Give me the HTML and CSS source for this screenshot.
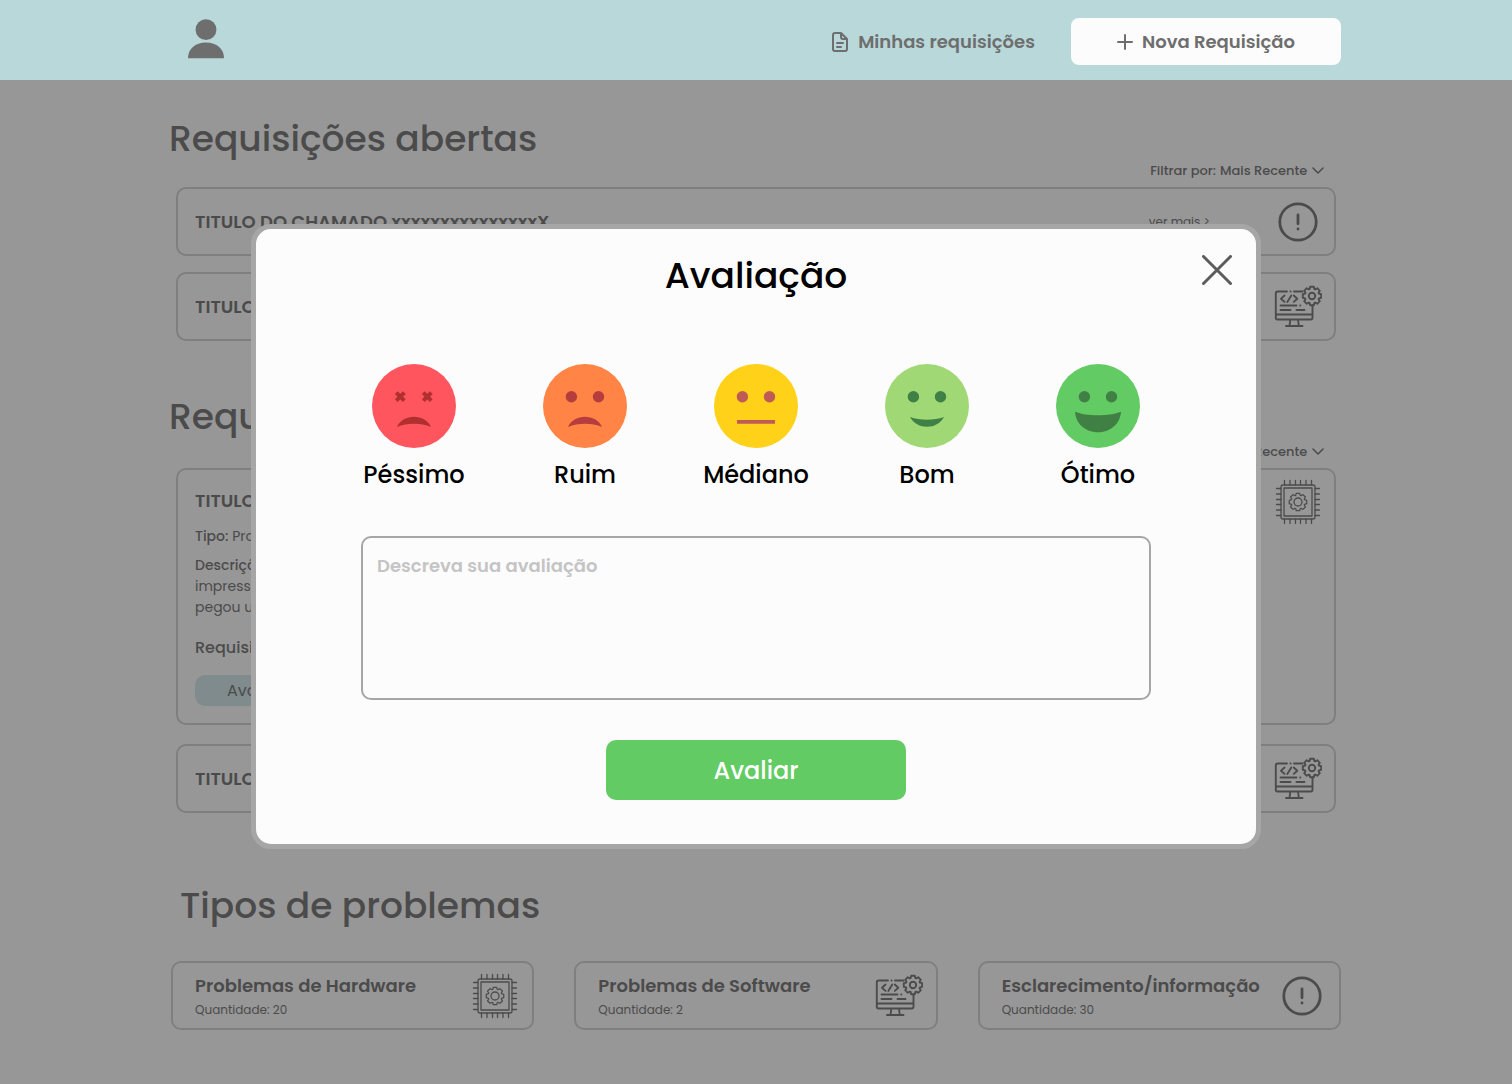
FILE: index.html
```html
<!DOCTYPE html>
<html lang="pt-BR">
<head>
<meta charset="utf-8">
<meta name="viewport" content="width=device-width, initial-scale=1">
<title>Requisições</title>
<link rel="stylesheet" href="styles.css">
</head>
<body>
<svg class="sprite" aria-hidden="true">
  <symbol id="gear" viewBox="-10 -10 20 20" overflow="visible">
    <path d="M6.9-2.4 9.2-1.8V1.8L6.9 2.4 6.6 3.2 7.8 5.2 5.2 7.8 3.2 6.6 2.4 6.9 1.8 9.2H-1.8L-2.4 6.9-3.2 6.6-5.2 7.8-7.8 5.2-6.6 3.2-6.9 2.4-9.2 1.8V-1.8L-6.9-2.4-6.6-3.2-7.8-5.2-5.2-7.8-3.2-6.6-2.4-6.9-1.8-9.2H1.8L2.4-6.9 3.2-6.6 5.2-7.8 7.8-5.2 6.6-3.2Z"/>
  </symbol>
  <symbol id="chip" viewBox="0 0 48 48">
    <rect x="7" y="7" width="34" height="34" rx="2"/>
    <rect x="10" y="10" width="28" height="28"/>
    <path d="M10.5 2.500v4.500M16 2.500v4.500M21.500 2.500v4.500M26.500 2.500v4.500M32 2.500v4.500M37.500 2.500v4.500M10.500 41v4.500M16 41v4.500M21.500 41v4.500M26.500 41v4.500M32 41v4.500M37.500 41v4.500M2.500 10.500H7M2.500 16H7M2.500 21.500H7M2.500 26.500H7M2.500 32H7M2.500 37.500H7M41 10.500h4.500M41 16h4.500M41 21.500h4.500M41 26.500h4.500M41 32h4.500M41 37.500h4.500"/>
    <use href="#gear" x="14.500" y="14.500" width="19" height="19"/>
    <circle cx="24" cy="24" r="4"/>
  </symbol>
  <symbol id="monitor" viewBox="0 0 48 48">
    <path d="M13 8.500H3.500Q1.800 8.500 1.800 10.200V34.800Q1.800 36.500 3.500 36.500H36.800Q38.500 36.500 38.500 34.800V22.500M20 8.500H28.500M16.400 8.500h.2M1.800 31.500H38.500M16.300 36.500 15.500 43M24 36.500 24.800 43M12 43H28.500M10.500 12.500 7 15.700 10.500 18.900M17.300 12.500 13.300 18.900M19.800 12.500 23.300 15.700 19.800 18.900M6.500 22.500H22.500M26.200 22.500h.2M6.500 27H16.500M22.500 27H30.500"/>
    <use href="#gear" x="28" y="3" width="20" height="20"/>
    <circle cx="38" cy="13" r="3.200"/>
  </symbol>
  <symbol id="alert" viewBox="0 0 48 48">
    <circle cx="24" cy="24" r="18.200"/>
    <path d="M24 17V25.800M24 30.800v.3"/>
  </symbol>
</svg>

<header class="topbar">
  <div class="topbar-inner">
    <a class="profile" href="#" aria-label="Perfil">
      <svg width="36" height="40" viewBox="0 0 36 40"><circle cx="18" cy="9.700" r="10.400"/><path d="M0 38.200C0 29 7 22.500 18 22.500S36 29 36 38.200Z"/></svg>
    </a>
    <nav class="topnav">
      <a class="nav-link" href="#">
        <svg width="18" height="22" viewBox="0 0 18 22"><path d="M10 2H4Q2 2 2 4V18Q2 20 4 20H14Q16 20 16 18V8ZM10 2V6Q10 8 12 8H16M6 12H12M6 16H10"/></svg>
        Minhas requisições
      </a>
      <button class="new-button" type="button">
        <svg width="16" height="16" viewBox="0 0 16 16"><path d="M8 1V15M1 8H15"/></svg>
        Nova Requisição
      </button>
    </nav>
  </div>
</header>

<main class="page">
  <section class="requests">
    <div class="section-head">
      <h2>Requisições abertas</h2>
      <label class="filter">Filtrar por:
        <select><option>Mais Recente</option></select>
        <svg width="12" height="8" viewBox="0 0 12 8"><path d="M1 1 6 6 11 1"/></svg>
      </label>
    </div>
    <article class="card">
      <h3>TITULO DO CHAMADO xxxxxxxxxxxxxxxX</h3>
      <a class="more" href="#">ver mais &gt;</a>
      <svg class="icon bold"><use href="#alert"/></svg>
    </article>
    <article class="card">
      <h3>TITULO DO CHAMADO xxxxxxxxxxxxxxxX</h3>
      <a class="more" href="#">ver mais &gt;</a>
      <svg class="icon"><use href="#monitor"/></svg>
    </article>
  </section>

  <section class="requests closed">
    <div class="section-head">
      <h2>Requisições fechadas</h2>
      <label class="filter">Filtrar por:
        <select><option>Mais Recente</option></select>
        <svg width="12" height="8" viewBox="0 0 12 8"><path d="M1 1 6 6 11 1"/></svg>
      </label>
    </div>
    <article class="card open">
      <div class="details">
        <h3>TITULO DO CHAMADO</h3>
        <p class="type"><b>Tipo:</b> Problema de Hardware</p>
        <p class="description"><b>Descrição:</b> Minha impressora parou de funcionar, a<br>impressora não liga desde ontem e acho que<br>pegou umidade.</p>
        <p class="status">Requisição finalizada</p>
        <button class="rate-button" type="button">Avaliar</button>
      </div>
      <svg class="icon thin"><use href="#chip"/></svg>
    </article>
    <article class="card">
      <h3>TITULO DO CHAMADO xxxxxxxxxxxxxxxX</h3>
      <a class="more" href="#">ver mais &gt;</a>
      <svg class="icon"><use href="#monitor"/></svg>
    </article>
  </section>

  <section class="types">
    <h2>Tipos de problemas</h2>
    <div class="type-grid">
      <article class="card">
        <div><h3>Problemas de Hardware</h3><p class="count">Quantidade: 20</p></div>
        <svg class="icon thin"><use href="#chip"/></svg>
      </article>
      <article class="card">
        <div><h3>Problemas de Software</h3><p class="count">Quantidade: 2</p></div>
        <svg class="icon"><use href="#monitor"/></svg>
      </article>
      <article class="card">
        <div><h3>Esclarecimento/informação</h3><p class="count">Quantidade: 30</p></div>
        <svg class="icon bold"><use href="#alert"/></svg>
      </article>
    </div>
  </section>
</main>

<div class="overlay">
  <form class="modal" role="dialog" aria-modal="true" aria-labelledby="modal-title">
    <button class="close" type="button" aria-label="Fechar">
      <svg width="30" height="30" viewBox="0 0 30 30"><path d="M1.500 1.500 28.500 28.500M28.500 1.500 1.500 28.500"/></svg>
    </button>
    <h1 id="modal-title">Avaliação</h1>
    <div class="ratings">
      <label class="rating">
        <input type="radio" name="nota" value="1">
        <svg width="84" height="84" viewBox="0 0 84 84"><circle cx="42" cy="42" r="42" fill="#ff555f"/><path d="M24.300 28.700l8 8M32.300 28.700l-8 8M51.300 28.700l8 8M59.300 28.700l-8 8" stroke="#b02f2f" stroke-width="4"/><path d="M25 63C31 49.300 53 49.300 59 63 49 58.600 35 58.600 25 63Z" fill="#b02f2f"/></svg>
        Péssimo
      </label>
      <label class="rating">
        <input type="radio" name="nota" value="2">
        <svg width="84" height="84" viewBox="0 0 84 84"><circle cx="42" cy="42" r="42" fill="#ff8445"/><g fill="#b53d3d"><circle cx="28.400" cy="32.800" r="5.700"/><circle cx="55.500" cy="32.800" r="5.700"/><path d="M25 63C31 49.300 53 49.300 59 63 49 58.600 35 58.600 25 63Z"/></g></svg>
        Ruim
      </label>
      <label class="rating">
        <input type="radio" name="nota" value="3">
        <svg width="84" height="84" viewBox="0 0 84 84"><circle cx="42" cy="42" r="42" fill="#ffd118"/><g fill="#c05a55"><circle cx="28.400" cy="32.800" r="5.700"/><circle cx="55.500" cy="32.800" r="5.700"/><path d="M23 56H61V59.700H23Z"/></g></svg>
        Médiano
      </label>
      <label class="rating">
        <input type="radio" name="nota" value="4">
        <svg width="84" height="84" viewBox="0 0 84 84"><circle cx="42" cy="42" r="42" fill="#9fd874"/><g fill="#3e8045"><circle cx="28.400" cy="32.800" r="5.700"/><circle cx="55.500" cy="32.800" r="5.700"/><path d="M25 53C35 56.700 49 56.700 59 53 52 66 32 66 25 53Z"/></g></svg>
        Bom
      </label>
      <label class="rating">
        <input type="radio" name="nota" value="5">
        <svg width="84" height="84" viewBox="0 0 84 84"><circle cx="42" cy="42" r="42" fill="#63cb63"/><g fill="#408045"><circle cx="28.400" cy="32.800" r="5.700"/><circle cx="55.500" cy="32.800" r="5.700"/><path d="M19 47.700C31 52.500 53 52.500 65 47.700 63 75 21 75 19 47.700Z"/></g></svg>
        Ótimo
      </label>
    </div>
    <textarea aria-label="Descreva sua avaliação" placeholder="Descreva sua avaliação"></textarea>
    <button class="submit" type="submit">Avaliar</button>
  </form>
</div>
</body>
</html>
```
FILE: styles.css
```css
* {
  box-sizing: border-box;
}

body {
  margin: 0;
  background: #fcfcfc;
  color: #7e7e7e;
  font-family: Poppins, Inter, sans-serif;
}

h1, h2, h3, p {
  margin: 0;
  font-weight: 500;
}

a {
  color: inherit;
  text-decoration: none;
}

button, select, textarea {
  font: inherit;
  color: inherit;
}

button {
  border: 0;
  padding: 0;
  cursor: pointer;
}

svg {
  flex: none;
  fill: none;
  stroke-linecap: round;
  stroke-linejoin: round;
}

.sprite {
  position: absolute;
  width: 0;
  height: 0;
}

/* Top bar */

.topbar {
  position: relative;
  z-index: 2;
  background: #b8d8d9;
  color: #6e6e6e;
  padding: 0 16px;
}

.topbar-inner {
  display: flex;
  align-items: center;
  justify-content: space-between;
  max-width: 1170px;
  min-height: 80px;
  margin: 0 auto;
  padding-left: 17px;
}

.profile svg {
  display: block;
  overflow: visible;
  fill: #6e6e6e;
}

.topnav {
  display: flex;
  align-items: center;
  gap: 36px;
  padding-top: 3px;
  font-size: 18px;
  font-weight: 600;
}

.nav-link, .new-button {
  display: flex;
  align-items: center;
  gap: 9px;
}

.nav-link svg, .new-button svg {
  stroke: #6e6e6e;
  stroke-width: 2;
}

.new-button {
  justify-content: center;
  width: 270px;
  height: 47px;
  border-radius: 8px;
  background: #fcfcfc;
}

/* Page */

.page {
  max-width: 1170px;
  margin: 0 auto;
  padding: 31px 0 54px;
}

h2 {
  font-size: 36px;
  line-height: 56px;
}

h3 {
  font-size: 18px;
  line-height: 28px;
  font-weight: 600;
}

.requests {
  display: flex;
  flex-direction: column;
  gap: 16px;
  margin-bottom: 48px;
  padding: 0 5px;
}

.section-head {
  display: flex;
  align-items: flex-end;
  justify-content: space-between;
  margin: 0 0 -16px -7px;
  padding: 0 12px 6px 0;
}

.section-head h2 {
  margin-bottom: 14px;
}

.closed h2 {
  margin-bottom: 17px;
}

.filter {
  display: flex;
  align-items: center;
  gap: 4px;
  font-size: 13px;
  line-height: 20px;
  font-weight: 500;
}

.filter select {
  appearance: none;
  border: 0;
  padding: 0;
  background: none;
}

.filter svg {
  stroke: #7e7e7e;
  stroke-width: 1.5;
}

.card {
  display: flex;
  align-items: center;
  justify-content: space-between;
  min-height: 69px;
  padding: 0 12px 0 17px;
  border: 2px solid #d4d4d4;
  border-radius: 10px;
}

.more {
  margin-left: auto;
  margin-right: 64px;
  font-size: 12px;
}

.icon {
  width: 48px;
  height: 48px;
  stroke: #7e7e7e;
  stroke-width: 1.9;
}

.icon.thin {
  stroke-width: 1.3;
}

.icon.bold {
  stroke-width: 2.8;
}

.card.open {
  align-items: flex-start;
  min-height: 257px;
  padding-top: 8px;
  margin-bottom: 3px;
}

.details {
  padding-top: 9px;
  font-size: 14px;
  line-height: 21px;
}

.details p {
  font-weight: 400;
}

.details b {
  font-weight: 500;
}

.details .type {
  margin: 11px 0 8px;
}

.details .status {
  margin: 19px 0 17px;
  font-size: 16px;
  font-weight: 500;
}

.rate-button {
  width: 150px;
  height: 31px;
  border-radius: 10px;
  background: #d4e8ea;
  font-size: 16px;
  text-align: left;
  padding-left: 32px;
}

.types {
  padding-top: 17px;
}

.types h2 {
  padding-left: 9px;
  margin-bottom: 27px;
}

.type-grid {
  display: grid;
  grid-template-columns: repeat(3, 1fr);
  gap: 40px;
}

.type-grid .card {
  padding-left: 22px;
  padding-right: 13px;
}

.count {
  font-size: 12px;
  line-height: 20px;
  font-weight: 400;
}

/* Rating dialog */

.overlay {
  position: fixed;
  inset: 0;
  z-index: 1;
  display: flex;
  align-items: flex-start;
  justify-content: center;
  padding: 224px 16px 16px;
  background: rgba(0, 0, 0, 0.4);
}

.modal {
  position: relative;
  display: flex;
  flex-direction: column;
  align-items: center;
  width: 100%;
  max-width: 1010px;
  padding: 19px 24px 44px;
  border: 5px solid #a6a6a6;
  border-radius: 20px;
  background: #fcfcfc;
  color: #000;
}

.close {
  position: absolute;
  top: 26px;
  right: 24px;
  background: none;
}

.close svg {
  display: block;
  stroke: #5c5c5c;
  stroke-width: 3;
}

h1 {
  font-size: 36px;
  line-height: 56px;
}

.ratings {
  display: grid;
  grid-template-columns: repeat(5, 171px);
  margin-top: 60px;
}

.rating {
  display: flex;
  flex-direction: column;
  align-items: center;
  gap: 9px;
  font-size: 24px;
  line-height: 36px;
  font-weight: 500;
  cursor: pointer;
}

.rating input {
  position: absolute;
  appearance: none;
  margin: 0;
}

.rating svg {
  stroke-linecap: butt;
}

textarea {
  width: 100%;
  max-width: 790px;
  height: 164px;
  margin: 43px 0 40px;
  padding: 14px;
  border: 2px solid #a6a6a6;
  border-radius: 10px;
  background: none;
  font-size: 18px;
  line-height: 28px;
  font-weight: 600;
  resize: none;
}

textarea::placeholder {
  color: #c4c4c4;
  opacity: 1;
}

.submit {
  width: 300px;
  height: 60px;
  border-radius: 10px;
  background: #63cb63;
  color: #fff;
  font-size: 24px;
  font-weight: 500;
}
```
